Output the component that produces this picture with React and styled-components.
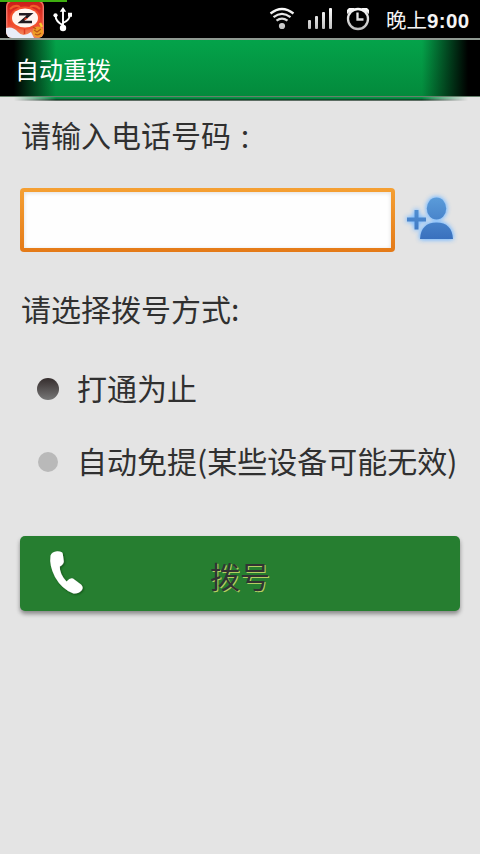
import React from "react";
import styled, { createGlobalStyle } from "styled-components";

const GlobalStyle = createGlobalStyle`
  * { box-sizing: border-box; }
  body { margin: 0; background: #e4e4e4; }
`;

const Screen = styled.main`
  width: 480px;
  height: 854px;
  display: flex;
  flex-direction: column;
  overflow: hidden;
  background: #e4e4e4;
  color: #303030;
  font-family: "Noto Sans CJK SC", sans-serif;
`;

const StatusBar = styled.header`
  position: relative;
  height: 38px;
  display: flex;
  align-items: center;
  justify-content: space-between;
  padding: 0 9px 0 6px;
  background: #000;
`;

const Progress = styled.div`
  position: absolute;
  top: 0;
  left: 0;
  width: 67px;
  height: 2px;
  background: #3fae10;
`;

const IconGroup = styled.div`
  height: 38px;
  display: flex;
  svg { display: block; flex: none; }
`;

const Clock = styled.time`
  width: 85px;
  margin-left: 13px;
  color: #f4f4f4;
  font-size: 20.5px;
  line-height: 38px;
  white-space: nowrap;
  b { font: bold 20.5px/38px "Liberation Sans", sans-serif; letter-spacing: 0.4px; }
`;

const TitleBar = styled.div`
  height: 59px;
  padding-left: 15px;
  border-top: 2px solid #8f9a92;
  border-bottom: 1px solid #66806c;
  background:
    linear-gradient(90deg, #000 0 14px, transparent 56px 422px, #000 468px),
    linear-gradient(#04a34a, #038a3c);
  color: #fff;
  font-size: 24px;
  line-height: 57px;
`;

const TitleShadow = styled.div`
  height: 4px;
  background: linear-gradient(#07a04c, #06783a 50%, #10261a 75%, #a9b5ad);
  mask-image: linear-gradient(90deg, transparent 14px, #000 56px 422px, transparent 468px);
`;

const Form = styled.form`
  display: flex;
  flex-direction: column;
  padding: 0 20px;
`;

const Label = styled.label`
  height: 44px;
  margin-top: ${(p) => p.$top}px;
  padding-left: 1px;
  font-size: 30px;
  line-height: 40px;
  white-space: nowrap;
`;

const WideColon = styled.span`
  font-family: "Noto Sans CJK TC", sans-serif;
  font-size: 26px;
  line-height: 1;
  margin-left: 1px;
  vertical-align: -2px;
`;

const NumberRow = styled.div`
  display: flex;
  margin-top: 30px;
  height: 64px;
  svg { display: block; flex: none; }
`;

const FieldFrame = styled.div`
  width: 375px;
  height: 64px;
  padding: 4px;
  border-radius: 4px;
  background: linear-gradient(#f5a033, #e47a18);
`;

const NumberInput = styled.input`
  display: block;
  width: 100%;
  height: 100%;
  padding: 0 10px;
  border: 0;
  outline: 0;
  border-radius: 0;
  background: #fefefe;
  box-shadow: inset 0 1px 4px #ddd;
  font: 30px "Noto Sans CJK SC", sans-serif;
`;

const Option = styled.div`
  display: flex;
  align-items: center;
  height: 44px;
  margin-top: ${(p) => p.$top}px;
  padding-left: 16px;
  font-size: 30px;
  line-height: 40px;
  white-space: nowrap;
`;

const OptionText = styled.span`
  height: 44px;
`;

const Dot = styled.span`
  flex: none;
  width: ${(p) => (p.$on ? 22 : 20)}px;
  height: ${(p) => (p.$on ? 22 : 20)}px;
  margin: ${(p) => (p.$on ? "0 18px 0 1px" : "0 19px 0 2px")};
  border-radius: 50%;
  background: ${(p) => (p.$on ? "linear-gradient(#352d2d, #777)" : "#b9b9b9")};
`;

const DialButton = styled.button`
  display: grid;
  grid-template-columns: 60px 1fr 60px;
  align-items: center;
  width: 440px;
  height: 75px;
  margin-top: 52px;
  padding: 0 10px;
  border: 0;
  border-radius: 5px;
  background: #267e30;
  box-shadow: 0 3px 4px rgba(0, 0, 0, 0.4);
  color: #333;
  font: 30px/75px "Noto Sans CJK SC", sans-serif;
  text-shadow: 1px 1px 0 #b4cf62;
  svg { display: block; }
  span { padding-top: 3px; line-height: 72px; }
`;

function AppIcon() {
  return (
    <svg width="38" height="38" viewBox="0 0 38 38">
      <defs>
        <linearGradient id="app" x2="0" y2="1">
          <stop stopColor="#c81a17" />
          <stop offset=".65" stopColor="#ee4831" />
          <stop offset="1" stopColor="#f59a67" />
        </linearGradient>
        <clipPath id="appClip"><rect width="38" height="38" rx="6" /></clipPath>
      </defs>
      <g clipPath="url(#appClip)">
        <rect width="38" height="38" fill="url(#app)" />
        <rect x=".7" y=".7" width="36.6" height="36.6" rx="6" fill="none" stroke="#ec766b" strokeWidth="1.4" />
        <path d="M4 9Q9 4 14 7M24 7Q29 4 34 9" fill="none" stroke="#f05d2b" strokeWidth="2" />
        <path d="M0 28Q7 26 12 32T25 32L28 38H0Z" fill="#e9edf8" />
        <ellipse cx="19" cy="18" rx="15" ry="11.5" fill="#f3502c" />
        <ellipse cx="19" cy="18" rx="13" ry="9.5" fill="#fff5ef" />
        <path d="M13 14.2H24L15 22H26" fill="none" stroke="#211b22" strokeWidth="2.6" />
        <path d="M19 17.5l3 1-4 2z" fill="#e33a23" />
        <path d="M18.5 29v5" stroke="#dd3d21" strokeWidth="1.5" />
        <circle cx="32" cy="32" r="5.5" fill="#ee9c25" />
        <path d="M28 30l3 2 4-3M29 34q3 2 6-1M27 27l3 2" fill="none" stroke="#b95616" strokeWidth="1.2" />
        <path d="M34 23l2 4" stroke="#f5c42d" strokeWidth="2.5" />
      </g>
    </svg>
  );
}

function UsbIcon() {
  return (
    <svg width="38" height="38" viewBox="44 0 38 38" fill="none" stroke="#fff" strokeWidth="1.9">
      <path d="M63 27V10M63 25Q55.5 22 55.5 15M63 23Q70 20 70 14" />
      <circle cx="63" cy="28" r="3.2" fill="#fff" stroke="none" />
      <circle cx="55.5" cy="15.3" r="2.1" fill="#fff" stroke="none" />
      <path d="M68 12.8h4v4h-4zM63 7l3.2 4.7h-6.4z" fill="#fff" stroke="none" />
    </svg>
  );
}

function StatusIcons() {
  return (
    <svg width="106" height="38" viewBox="267 0 106 38" fill="none">
      <defs>
        <linearGradient id="metal" gradientUnits="userSpaceOnUse" x1="0" y1="7" x2="0" y2="30">
          <stop stopColor="#fff" /><stop offset="1" stopColor="#bdbdbd" />
        </linearGradient>
      </defs>
      <g stroke="url(#metal)" strokeWidth="2.3">
        <path d="M270.5 13.5Q282 4.5 293.5 13.5M273.5 17.2Q282 10.5 290.5 17.2M276.5 20.7Q282 16.5 287.5 20.7" />
        <circle cx="358" cy="19" r="10" />
        <path d="M357.5 12.5v7h6" />
      </g>
      <g fill="url(#metal)">
        <circle cx="282" cy="26" r="3.1" />
        <rect x="308" y="20" width="3" height="9" rx="1" />
        <rect x="315" y="16" width="3" height="13" rx="1" />
        <rect x="322" y="12" width="3" height="17" rx="1" />
        <rect x="329" y="8" width="3" height="21" rx="1" />
        <path d="M347 14V10l2-2h6zM369 14V10l-2-2h-6z" />
      </g>
    </svg>
  );
}

function AddContactIcon() {
  return (
    <svg width="65" height="64" viewBox="395 188 65 64">
      <defs>
        <linearGradient id="contact" gradientUnits="userSpaceOnUse" x1="0" y1="197" x2="0" y2="240">
          <stop stopColor="#5b9cda" /><stop offset="1" stopColor="#386fbd" />
        </linearGradient>
        <filter id="halo" x="-30%" y="-30%" width="160%" height="160%" colorInterpolationFilters="sRGB">
          <feGaussianBlur in="SourceAlpha" stdDeviation="2.6" result="soft" />
          <feFlood floodColor="#7dbcff" />
          <feComposite in2="soft" operator="in" result="glow" />
          <feMerge>
            <feMergeNode in="glow" />
            <feMergeNode in="glow" />
            <feMergeNode in="SourceGraphic" />
          </feMerge>
        </filter>
      </defs>
      <g fill="url(#contact)" filter="url(#halo)">
        <ellipse cx="436.5" cy="208.5" rx="9.7" ry="11" />
        <path d="M420 239Q421 222.5 436.5 222.5T453 239Z" />
        <path d="M414.5 210h4v7.5h7.5v4h-7.5v8h-4v-8H407v-4h7.5z" />
      </g>
    </svg>
  );
}

function PhoneIcon() {
  return (
    <svg width="60" height="75" viewBox="30 536 60 75">
      <defs>
        <filter id="phoneShade" x="-20%" y="-20%" width="140%" height="140%">
          <feDropShadow dx="1" dy="1" stdDeviation="1" floodColor="#0b3b13" floodOpacity=".7" />
        </filter>
      </defs>
      <path
        filter="url(#phoneShade)"
        fill="#fff"
        d="M50.5 555.5Q52 551.5 57 551.2Q62.5 551 62.8 554L63.8 561.5Q63.5 564.5 59.8 566.5Q59.5 574 66.5 581.5Q70 577.5 73 578.5L81 584.5Q84 587.5 81.5 590.5Q78.5 594 73.5 593.5Q62 589.5 55 577Q49 565.5 50.5 555.5Z"
      />
    </svg>
  );
}

export default function App() {
  return (
    <Screen>
      <GlobalStyle />
      <StatusBar>
        <Progress />
        <IconGroup><AppIcon /><UsbIcon /></IconGroup>
        <IconGroup>
          <StatusIcons />
          <Clock>晚上<b>9:00</b></Clock>
        </IconGroup>
      </StatusBar>
      <TitleBar>自动重拨</TitleBar>
      <TitleShadow />
      <Form onSubmit={(e) => e.preventDefault()}>
        <Label $top={13} htmlFor="number">请输入电话号码<WideColon lang="zh-TW">：</WideColon></Label>
        <NumberRow>
          <FieldFrame><NumberInput id="number" /></FieldFrame>
          <AddContactIcon />
        </NumberRow>
        <Label as="div" $top={36}>请选择拨号方式:</Label>
        <Option $top={35}><Dot $on /><OptionText>打通为止</OptionText></Option>
        <Option $top={29}><Dot /><OptionText>自动免提(某些设备可能无效)</OptionText></Option>
        <DialButton type="submit"><PhoneIcon /><span>拨号</span></DialButton>
      </Form>
    </Screen>
  );
}
